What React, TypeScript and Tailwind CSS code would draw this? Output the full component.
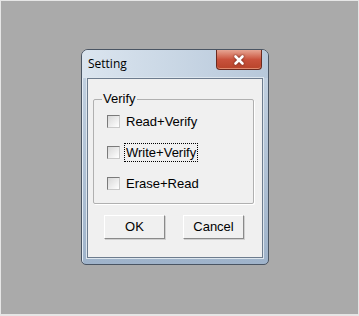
import { X } from "lucide-react"

const options = [
  { label: "Read+Verify", focused: false },
  { label: "Write+Verify", focused: true },
  { label: "Erase+Read", focused: false },
]

function CheckBox() {
  return (
    <span className="block w-[13px] h-[13px] border border-[#7a7a7a] border-r-[#c9c9c9] border-b-[#c9c9c9] bg-gradient-to-br from-[#d8d8d8] to-white" />
  )
}

function Button({ label }: { label: string }) {
  return (
    <button className="w-[61px] h-[24px] bg-[#f0f0f0] border border-t-white border-l-white border-r-[#8a8a8a] border-b-[#8a8a8a] shadow-[1px_1px_0_#d0d0d0] text-[13px] text-black">
      {label}
    </button>
  )
}

export default function App() {
  return (
    <div className="w-[359px] h-[316px] bg-[#e6e6e6] pt-px pl-px">
      <div className="w-[357px] h-[313px] bg-[#aaaaaa] pl-[80px] pt-[48px]">

        <div className="w-[188px] h-[216px] flex flex-col rounded-t-[7px] rounded-b-[5px] border border-[#4a5563] bg-gradient-to-b from-[#c6d4e3] to-[#9fb3ca] shadow-[inset_1px_1px_0_#e4ecf4]" style={{ fontFamily: '"Liberation Sans", Arial, sans-serif' }}>

          <div className="h-[28px] flex items-start justify-between rounded-t-[6px] bg-gradient-to-r from-[#dbe5ef] to-[#b7c8da]">
            <span className="pl-[6px] pt-[5px] text-[12px] text-black" style={{ fontFamily: '"Open Sans", "Noto Sans", sans-serif' }}>
              Setting
            </span>
            <div className="mr-[6px] w-[46px] h-[20px] flex items-center justify-center rounded-b-[4px] border border-t-0 border-[#6b2a1f] bg-gradient-to-b from-[#e6a593] via-[#c9523c] to-[#b8442a] shadow-[inset_0_-1px_0_#e08a6e]">
              <X size={14} strokeWidth={4.5} className="text-white drop-shadow-[0_0_1px_#5a1a10]" />
            </div>
          </div>

          <div className="mx-[5px] h-[180px] border border-[#6d7c8e] shadow-[0_0_0_1px_#dde6ee] bg-[#f0f0f0] text-[13px] text-black">

            <fieldset className="ml-[5px] mt-[12px] w-[161px] h-[113px] border border-[#b0b0b0] rounded-[2px] shadow-[1px_1px_0_white] px-[13px]">
              <legend className="ml-[-5px] px-[1px] leading-[16px]">Verify</legend>
              <div className="flex flex-col gap-[13px] pt-[5px]">
                {options.map(o => (
                  <label key={o.label} className="flex items-center gap-[5px] h-[18px]">
                    <CheckBox />
                    <span className={`px-px leading-[17px] ${o.focused ? "outline outline-1 outline-dotted outline-black" : ""}`}>
                      {o.label}
                    </span>
                  </label>
                ))}
              </div>
            </fieldset>

            <div className="flex gap-[18px] pl-[16px] pt-[11px]">
              <Button label="OK" />
              <Button label="Cancel" />
            </div>

          </div>
        </div>

      </div>
    </div>
  )
}
